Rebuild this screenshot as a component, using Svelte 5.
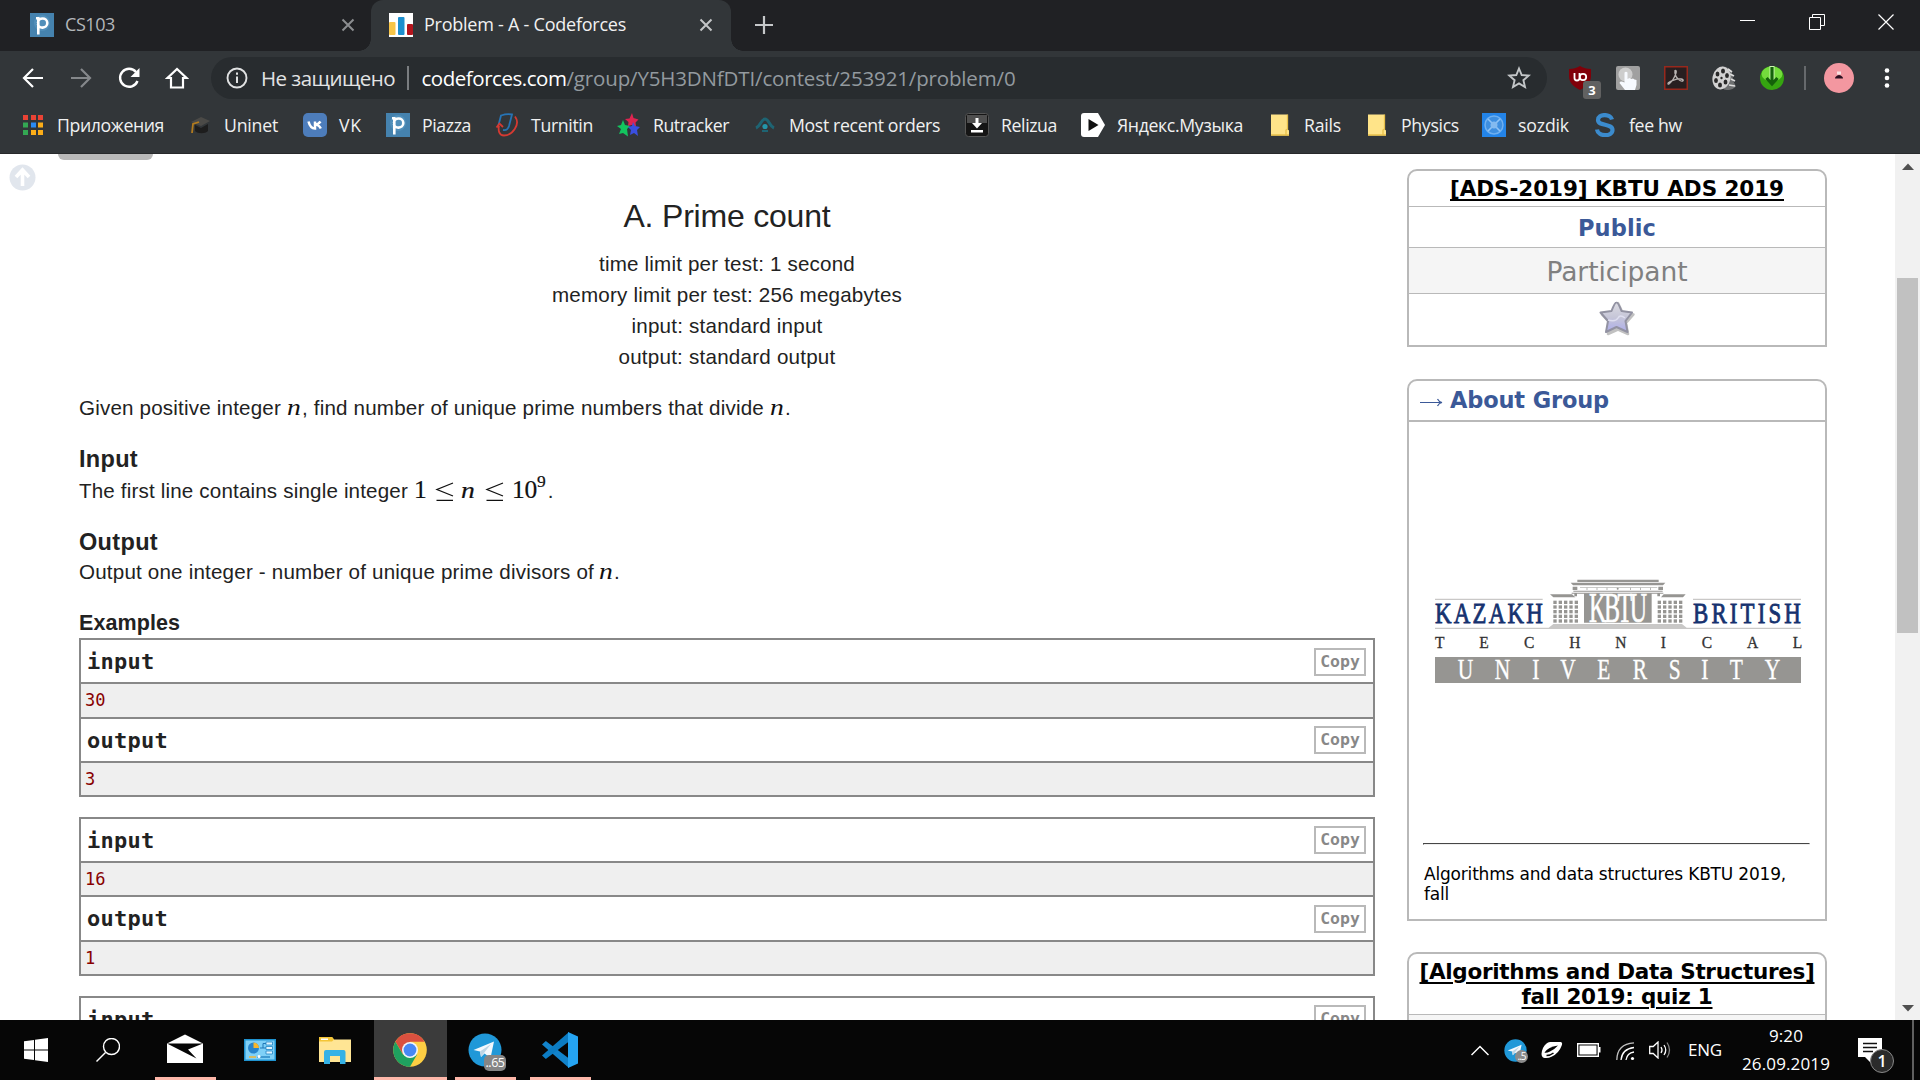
<script>
  // Spreads a run of text over an exact width by adjusting its letter spacing.
  function fit(node, width) {
    const natural = node.getBoundingClientRect().width;
    const count = node.textContent.length;
    node.style.letterSpacing = `${(width - natural) / count}px`;
  }

  const bookmarks = [
    { icon: 'apps', label: 'Приложения', x: 21, text: 107, end: 188 },
    { icon: 'cap', label: 'Uninet', x: 188, text: 54, end: 303 },
    { icon: 'vk', label: 'VK', x: 303, text: 23, end: 386 },
    { icon: 'piazza', label: 'Piazza', x: 386, text: 49, end: 495 },
    { icon: 'turnitin', label: 'Turnitin', x: 495, text: 62, end: 617 },
    { icon: 'rutracker', label: 'Rutracker', x: 617, text: 76, end: 753 },
    { icon: 'orders', label: 'Most recent orders', x: 753, text: 151, end: 965 },
    { icon: 'relizua', label: 'Relizua', x: 965, text: 56, end: 1081 },
    { icon: 'yandex', label: 'Яндекс.Музыка', x: 1081, text: 126, end: 1268 },
    { icon: 'folder', label: 'Rails', x: 1268, text: 37, end: 1365 },
    { icon: 'folder', label: 'Physics', x: 1365, text: 58, end: 1482 },
    { icon: 'sozdik', label: 'sozdik', x: 1482, text: 51, end: 1593 },
    { icon: 'fee', label: 'fee hw', x: 1593, text: 53, end: 1700 }
  ];

  const limits = [
    { text: 'time limit per test: 1 second', width: 256 },
    { text: 'memory limit per test: 256 megabytes', width: 350 },
    { text: 'input: standard input', width: 191 },
    { text: 'output: standard output', width: 217 }
  ];

  const samples = [
    { input: '30', output: '3' },
    { input: '16', output: '1' }
  ];

  const windowColumns = [0, 1, 2, 3, 4];
  const windowRows = [0, 1, 2, 3, 4];
</script>

{#snippet piazza()}
  <svg width="24" height="24" viewBox="0 0 24 24">
    <rect width="24" height="24" fill="#4582ae" />
    <circle cx="12" cy="10" r="8" fill="#5a97c2" opacity=".6" />
    <path d="M6 5.200h2.300V21.500M8 10c0-6 9.300-6 9.300 0s-9.300 6-9.300 1" fill="none" stroke="#fff" stroke-width="2.600" />
  </svg>
{/snippet}

{#snippet cross(color)}
  <svg width="14" height="14" viewBox="0 0 14 14"><path d="M1.500 1.500l11 11M12.500 1.500l-11 11" stroke={color} stroke-width="2" /></svg>
{/snippet}

{#snippet leq()}
  <svg class="leq" width="19" height="20" viewBox="0 0 19 20"><path d="M18 1L2 7.500 18 14M1.500 18.300H18" fill="none" stroke="#111" stroke-width="1.300" /></svg>
{/snippet}

{#snippet bookmarkIcon(name)}
  {#if name === 'piazza'}
    {@render piazza()}
  {:else}
    <svg width="24" height="24" viewBox="0 0 24 24">
      {#if name === 'apps'}
        <path d="M2 2h5v5H2zM10 2h5v5h-5zM17 2h5v5h-5z" fill="#ea4335" />
        <path d="M2 9.500h5v5H2zM2 17h5v5H2z" fill="#34a853" />
        <path d="M10 9.500h5v5h-5z" fill="#2a8bf5" />
        <path d="M17 9.500h5v5h-5zM10 17h5v5h-5zM17 17h5v5h-5z" fill="#fbad18" />
      {:else if name === 'cap'}
        <path d="M7 12l6 3 7-4v7c-3 3-10 3-13 0z" fill="#1d1d1d" />
        <path d="M3 9l10-5 9 4-9 5z" fill="#4b4a47" />
        <path d="M11 9l-6 2-1 9" fill="none" stroke="#b27b1e" stroke-width="1.800" />
      {:else if name === 'vk'}
        <rect width="24" height="24" rx="5" fill="#4d7dbb" />
        <path d="M5.500 8.500c1 4 3.200 7 6.500 7V8.500M12 11.500c2.500 0 4-1 5.500-3M12 11.500c3 0 4.500 1.500 5.800 4" fill="none" stroke="#fff" stroke-width="2.500" />
      {:else if name === 'turnitin'}
        <path d="M3.500 12L6 2.500q6-2 11-1L14 13q-1.500 5-6 4" fill="none" stroke="#2774b5" stroke-width="1.800" />
        <path d="M20 3.500c6 8-3 19-11 19-5 0-6-5-5-10M1.500 14.500l3-4 3.500 3.500" fill="none" stroke="#d53a32" stroke-width="1.800" />
      {:else if name === 'rutracker'}
        <path d="M15 0l1.500 5 5 1.500-3 3 .5 4-4-1.500-4 1 .5-4L8 6l4.500-.5z" fill="#df2450" />
        <path d="M6 7l2 5 5 1-3 3 1 7.500-5-3.500-4 1 2-5-4-3 4-1z" fill="#13c45e" />
        <path d="M16 9l2 4 5 1-3 3 1 6-4-3-4 2 1-5-3-3 4-1z" fill="#3a4fe0" />
      {:else if name === 'orders'}
        <path d="M3 15c5-2 5-9 9-9s4 7 9 9" fill="none" stroke="#1e6473" stroke-width="3" />
        <circle cx="12" cy="13.500" r="2.600" fill="#2396aa" />
        <path d="M9 18h6" stroke="#1e6473" stroke-width="2" />
      {:else if name === 'relizua'}
        <rect x=".5" y=".5" width="23" height="23" rx="3" fill="#151515" stroke="#555" />
        <path d="M2 2h20v8H2z" fill="#777" opacity=".6" />
        <path d="M10.500 5h3v5H17l-5 5.500L7 10h3.500zM6 17h12v2.500H6z" fill="#fff" />
      {:else if name === 'yandex'}
        <path d="M3 0h14l7 12-7 12H3q-3 0-3-3V3q0-3 3-3z" fill="#fff" />
        <path d="M7.500 6l10 6-10 6z" fill="#111" />
      {:else if name === 'folder'}
        <path d="M3 1.500h16.500V16l1.500 1.500v5H3z" fill="#ffe489" />
        <path d="M3 22h18M18 22v-5l1.500-1V1.500" fill="none" stroke="#e8c04a" stroke-width="1.300" />
      {:else if name === 'sozdik'}
        <rect width="24" height="24" fill="#2384e8" />
        <circle cx="12" cy="12" r="9" fill="#3e8fe0" stroke="#6fb0f0" stroke-width="1.500" />
        <path d="M6 6l12 12M18 6L6 18" stroke="#8fc3f6" stroke-width="1.600" />
        <circle cx="12" cy="12" r="3.500" fill="#83baf0" />
      {:else if name === 'fee'}
        <path d="M19 6.500C17.500 0.500 5 .5 5 7c0 6.500 14.500 3 14.500 10C19.500 24 5 24 4 16.500" fill="none" stroke="#3b8bcd" stroke-width="4.200" />
      {/if}
    </svg>
  {/if}
{/snippet}

{#snippet telegram(size)}
  <svg width={size} height={size} viewBox="0 0 34 34">
    <circle cx="17" cy="17" r="16.500" fill="#2098d8" />
    <path d="M5.500 17L26 8.500 22.500 25l-6-4.500-3.500 3.500-1-5.500z" fill="#f4f9fd" />
    <path d="M12 18.500L23 11l-7 9-3 4z" fill="#bdd5e5" />
  </svg>
{/snippet}

{#snippet sampleTitle(title)}
  <div class="sample-title">
    <span class="mono-title" use:fit={title.length * 13.5}>{title}</span>
    <button class="copy">Copy</button>
  </div>
{/snippet}

<div class="screen">
  <header class="tabs">
    <div class="tab first">
      {@render piazza()}
      <span class="tab-title" use:fit={50}>CS103</span>
      <span class="tab-close">{@render cross('#8b8d90')}</span>
    </div>
    <div class="tab active">
      <svg width="24" height="24" viewBox="0 0 24 24">
        <rect width="24" height="24" fill="#fff" />
        <rect x="0" y="9" width="6.500" height="13" rx="1" fill="#f7c548" />
        <rect x="9" y="4" width="6.500" height="18" rx="1" fill="#1d8fce" />
        <rect x="18" y="11" width="6" height="11" rx="1" fill="#b3151d" />
      </svg>
      <span class="tab-title" use:fit={202}>Problem - A - Codeforces</span>
      <span class="tab-close">{@render cross('#c3c5c7')}</span>
    </div>
    <svg class="new-tab" width="18" height="18" viewBox="0 0 18 18"><path d="M9 0v18M0 9h18" stroke="#c6c8ca" stroke-width="2.200" /></svg>
    <div class="window-controls">
      <svg width="16" height="16" viewBox="0 0 16 16"><path d="M0 6.500h15" stroke="#fff" /></svg>
      <svg width="16" height="16" viewBox="0 0 16 16" fill="none" stroke="#fff"><path d="M.5 3.500h11v12H.5zM3.500 3.500v-3h12v11h-3.500" /></svg>
      <svg width="16" height="16" viewBox="0 0 16 16"><path d="M.5 .5l15 15M15.500 .5l-15 15" stroke="#fff" stroke-width="1.200" /></svg>
    </div>
  </header>

  <nav class="toolbar">
    <div class="nav-icons">
      <svg width="24" height="24" viewBox="0 0 24 24" fill="none" stroke="#fff" stroke-width="2.200"><path d="M22 12H4M12 3l-9 9 9 9" /></svg>
      <svg width="24" height="24" viewBox="0 0 24 24" fill="none" stroke="#85888b" stroke-width="2.200"><path d="M2 12h18M12 3l9 9-9 9" /></svg>
      <svg width="24" height="24" viewBox="0 0 24 24" fill="none" stroke="#fff" stroke-width="2.400"><path d="M20.500 15A9 9 0 1 1 19 6" /><path d="M22.500 2v9h-9z" fill="#fff" stroke="none" /></svg>
      <svg width="24" height="24" viewBox="0 0 24 24" fill="none" stroke="#fff" stroke-width="2.200"><path d="M6 12v9.500h12V12h3.500L12 3l-9.500 9z" /></svg>
    </div>
    <div class="address">
      <svg width="22" height="22" viewBox="0 0 22 22" fill="none" stroke="#e0e1e2"><circle cx="11" cy="11" r="9.500" stroke-width="1.900" /><path d="M11 9.500v6.500M11 5.500v2.200" stroke-width="2" /></svg>
      <span class="insecure" use:fit={134}>Не защищено</span>
      <span class="divider"></span>
      <span class="host" use:fit={145}>codeforces.com</span>
      <span class="path" use:fit={449}>/group/Y5H3DNfDTI/contest/253921/problem/0</span>
      <svg class="fav" width="24" height="24" viewBox="0 0 24 24"><path d="M12 2.500l2.700 6.500 7 .6-5.300 4.600 1.600 6.800-6-3.600L6 21l1.600-6.800L2.300 9.600l7-.6z" fill="none" stroke="#c3c6c8" stroke-width="1.900" /></svg>
    </div>
    <div class="extensions">
      <div class="ublock">
        <svg width="24" height="24" viewBox="0 0 24 24">
          <path d="M12 0c3 2 7 3 11 3v7c0 7-5 11-11 14C6 21 1 17 1 10V3c4 0 8-1 11-3z" fill="#800009" />
          <path d="M6.500 7v5q0 2.500 2.500 2.500t2.500-2.500V7" fill="none" stroke="#fff" stroke-width="1.800" />
          <circle cx="15" cy="11" r="3.200" fill="none" stroke="#fff" stroke-width="1.800" />
        </svg>
        <span class="ublock-badge">3</span>
      </div>
      <svg width="24" height="24" viewBox="0 0 24 24">
        <rect width="24" height="24" rx="2" fill="#a0a0a0" />
        <circle cx="9.500" cy="8.500" r="7" fill="#cdcdcd" />
        <path d="M8.500 6.500q1.500-1.500 3 0v6.500l2-1 1.500 1 2-.5 1.500 1 2 .5v5l-1.500 5H9L3.500 17q.5-2.500 5-.5z" fill="#f7faff" />
      </svg>
      <svg width="24" height="24" viewBox="0 0 24 24">
        <rect x=".75" y=".75" width="22.500" height="22.500" fill="#281f20" stroke="#97281c" stroke-width="1.500" />
        <path d="M11 4.500c3-1 0 6-2 9s-5 6-5 4 9-5 13-4.500 2 3-1 1.500-6-6-5-10z" fill="none" stroke="#b9b3b1" stroke-width="1.300" />
      </svg>
      <svg width="24" height="24" viewBox="0 0 24 24">
        <path d="M10 .5c9 0 11 7 11 14l3 6q-5 5-12 3z" fill="#6d6f70" />
        <path d="M16 3l4 3M18 8l4 2M19 13l4 2M17 19l6 1" stroke="#ddd" stroke-width="1.700" />
        <ellipse cx="9.500" cy="12" rx="9" ry="11.500" transform="rotate(12 9.500 12)" fill="#d2d2d2" />
        <g fill="#292929"><ellipse cx="11" cy="5" rx="2" ry="2.500" /><ellipse cx="5.500" cy="8" rx="1.900" ry="2.500" /><ellipse cx="15" cy="9.500" rx="1.900" ry="2.500" /><ellipse cx="4" cy="14.500" rx="1.900" ry="2.500" /><ellipse cx="8" cy="19" rx="2" ry="2.500" /><ellipse cx="13.500" cy="16" rx="1.900" ry="2.500" /><circle cx="9.500" cy="12" r="1.200" /></g>
      </svg>
      <svg width="24" height="24" viewBox="0 0 24 24">
        <circle cx="12" cy="12" r="12" fill="#35a510" />
        <ellipse cx="12" cy="8" rx="10.500" ry="7.500" fill="#74dc3c" />
        <path d="M12 0v17" stroke="#c8f5ad" stroke-width="5" />
        <path d="M12 1v16M6.500 12l5.500 6 5.500-6" fill="none" stroke="#14610a" stroke-width="3.200" />
      </svg>
    </div>
    <span class="divider"></span>
    <svg class="avatar" width="30" height="30" viewBox="0 0 30 30">
      <circle cx="15" cy="15" r="15" fill="#f397a0" />
      <path d="M11 15.500q0-2.500 4-3.500 4 1 4 3.500z" fill="#2a1020" /><path d="M13 8.500h4v3h-4z" fill="#f7dfe0" />
    </svg>
    <svg class="menu" width="6" height="22" viewBox="0 0 6 22" fill="#fff"><circle cx="3" cy="3.500" r="2.300" /><circle cx="3" cy="11" r="2.300" /><circle cx="3" cy="18.500" r="2.300" /></svg>
  </nav>

  <div class="bookmarks">
    {#each bookmarks as mark}
      <a class="bookmark" href="#top" style="width: {mark.end - mark.x}px">
        {@render bookmarkIcon(mark.icon)}
        <span use:fit={mark.text}>{mark.label}</span>
      </a>
    {/each}
  </div>

  <div class="viewport">
    <div class="left-rail">
      <svg width="27" height="27" viewBox="0 0 27 27"><circle cx="13.500" cy="13.500" r="13" fill="#e1e6ed" /><path d="M13.500 22V7M7 13l6.500-7 6.500 7" fill="none" stroke="#fff" stroke-width="3.600" /></svg>
    </div>
    <div class="old-tab"></div>

    <main class="problem">
      <h1><span use:fit={207}>A. Prime count</span></h1>
      {#each limits as limit}
        <div class="limit"><span use:fit={limit.width}>{limit.text}</span></div>
      {/each}

      <p class="statement">
        <span use:fit={202}>Given positive integer</span><i class="gap">n</i><span class="pre" use:fit={462}>, find number of unique prime numbers that divide</span><i class="gap">n</i>.
      </p>

      <h2><span use:fit={59}>Input</span></h2>
      <p class="bound">
        <span use:fit={329}>The first line contains single integer</span><span class="math gap"><span class="wide">1</span>{@render leq()}<i>n</i>{@render leq()}<span use:fit={25}>10</span><sup>9</sup></span>.
      </p>

      <h2 class="out"><span use:fit={79}>Output</span></h2>
      <p>
        <span use:fit={515}>Output one integer - number of unique prime divisors of</span><i class="gap">n</i>.
      </p>

      <h3><span use:fit={101}>Examples</span></h3>
      {#each samples as sample}
        <div class="sample">
          {@render sampleTitle('input')}
          <pre class="sample-value">{sample.input}</pre>
          {@render sampleTitle('output')}
          <pre class="sample-value">{sample.output}</pre>
        </div>
      {/each}
      <div class="sample">{@render sampleTitle('input')}</div>
    </main>

    <aside class="sidebar">
      <section class="box">
        <div class="line contest"><a href="#group" use:fit={334}>[ADS-2019] KBTU ADS 2019</a></div>
        <div class="line public"><span use:fit={78}>Public</span></div>
        <div class="line participant"><span use:fit={141}>Participant</span></div>
        <div class="line starline">
          <svg width="38" height="38" viewBox="0 0 38 38">
            <defs>
              <linearGradient id="starFill" x1="0" y1="0" x2="0" y2="1"><stop offset="0" stop-color="#dcdce2" /><stop offset=".5" stop-color="#c6c6d8" /><stop offset="1" stop-color="#adadea" /></linearGradient>
            </defs>
            <path d="M20 4l4.500 9.500 11 2-7.500 8.500 2 11-10-4.500-10 4.500 2-11-8-8.500 11-2z" fill="#999" stroke="#999" stroke-width="2.500" stroke-linejoin="round" opacity=".6" />
            <path d="M18.500 3.500Q20 3 23.500 12L34 13.500 27.500 22l2 11-11-5-10.500 5 2-11-7.500-8.500L13.500 12Q17 3 18.500 3.500z" fill="url(#starFill)" stroke="#9292a2" stroke-width="2" stroke-linejoin="round" />
            <path d="M10 21q8 2 10-2t7 0" fill="none" stroke="#dfdff0" stroke-width="1.500" />
          </svg>
        </div>
      </section>

      <section class="box about">
        <h4><svg class="arrow" width="23" height="9" viewBox="0 0 23 9"><path d="M0 4.500h21.500M17.500 1q1.500 3 4.500 3.500-3 .5-4.500 3.500" fill="none" stroke="#3b5998" stroke-width="1.200" /></svg><span use:fit={159}>About Group</span></h4>
        <div class="about-body">
          <svg class="logo" width="372" height="110" viewBox="96 54 1116 330">
            <g fill="#969592">
              <path d="M532 59h244v7H532zM512 68h284l-7 8H519zM450 103h66l10 9h-66zM791 103h66l-8 9h-66z" />
              <path d="M518 80h14v10h-14zM775 80h14v10h-14zM540 82h232v1.500H540zM520 92h268v3H520zM552 100h203v88H552z" />
              <path d="M515 98h275v3H515zM523 101h8v8h-8zM772 101h8v8h-8z" />
              {#each windowColumns as column}
                {#each windowRows as row}
                  <rect x={460 + column * 16} y={122 + row * 14} width="10" height="10" />
                  <rect x={773 + column * 16} y={122 + row * 14} width="10" height="10" />
                {/each}
              {/each}
              <path d="M105 291h1098v78H105z" />
            </g>
            <g fill="#c9c8c7"><path d="M105 116h323v4H105zM879 116h324v4H879zM105 203h1098v4H105zM460 192h386l14 11H446z" /></g>
            <g fill="#969592"><circle cx="653" cy="86" r="3" /><path d="M560 83h2v7h-2zM590 83h2v7h-2zM620 83h2v7h-2zM690 83h2v7h-2zM720 83h2v7h-2zM750 83h2v7h-2z" /></g>
            <g class="logo-text">
              <g fill="#16326f" stroke="#16326f" stroke-width="2.500" font-size="88">
                <text transform="translate(105 188) scale(.78 1)" textLength="415">KAZAKH</text>
                <text transform="translate(879 188) scale(.78 1)" textLength="415">BRITISH</text>
              </g>
              <text transform="translate(567 187) scale(.58 1)" textLength="300" fill="#fff" stroke="#fff" stroke-width="2" font-size="124">KBTU</text>
              <text y="265" fill="#333" stroke="#333" font-size="53" transform="scale(.88 1)">{#each [105, 238, 372, 508, 646, 782, 905, 1041, 1178] as x, i}<tspan x={x / 0.88}>{'TECHNICAL'[i]}</tspan>{/each}</text>
              <text y="358" fill="#fff" stroke="#fff" font-size="87" transform="scale(.74 1)">{#each [173, 284, 397, 481, 592, 698, 806, 904, 989, 1094] as x, i}<tspan x={x / 0.74}>{'UNIVERSITY'[i]}</tspan>{/each}</text>
            </g>
          </svg>
          <hr />
          <p class="about-text"><span use:fit={362}>Algorithms and data structures KBTU 2019,</span><br /><span use:fit={25}>fall</span></p>
        </div>
      </section>

      <section class="box quiz">
        <div class="line quiz-title">
          <a href="#quiz" use:fit={395}>[Algorithms and Data Structures]</a>
          <a href="#quiz" use:fit={191}>fall 2019: quiz 1</a>
        </div>
        <div class="quiz-body"></div>
      </section>
    </aside>

    <div class="scrollbar">
      <svg width="12" height="7" viewBox="0 0 12 7"><path d="M0 7l6-6.500L12 7z" fill="#505050" /></svg>
      <div class="thumb"></div>
      <svg width="12" height="7" viewBox="0 0 12 7"><path d="M0 0l6 6.500L12 0z" fill="#505050" /></svg>
    </div>
  </div>

  <footer class="taskbar">
    <div class="app start"><svg width="24" height="24" viewBox="0 0 24 24" fill="#fff"><path d="M0 3.300l10-1.300v9.400H0zM11 1.800L24 0v11.400H11zM0 12.600h10V22L0 20.700zM11 12.600h13V24l-13-1.800z" /></svg></div>
    <div class="app find"><svg width="24" height="24" viewBox="0 0 24 24" fill="none" stroke="#fff" stroke-width="1.400"><circle cx="15.500" cy="8.500" r="8" /><path d="M9.500 14.500L.5 23.500" /></svg></div>
    <div class="app mail open"><svg width="36" height="30" viewBox="0 0 36 30"><path d="M0 9.500L18 .5l18 9V29H0z" fill="#fff" /><path d="M0 9.500h36L21 15.500l8.500 9L0 9.500z" fill="#060606" /></svg></div>
    <div class="app panel"><svg width="32" height="22" viewBox="0 0 32 22">
      <rect width="32" height="22" fill="#1f93d0" /><rect x="1.500" y="1.500" width="29" height="19" fill="#7fd0f7" />
      <circle cx="9.500" cy="9" r="5.500" fill="#2784cc" /><path d="M9.500 9V3.500A5.500 5.500 0 0 1 15 9z" fill="#f8b62b" />
      <path d="M16 9h3V4.500h3M19 9h3" fill="none" stroke="#2077b7" />
      <path d="M22 3h6.500v3H22zM22 7.500h6.500v3H22zM22 12h6.500v3H22z" fill="#dff4ff" stroke="#2186c6" stroke-width=".8" />
      <path d="M5 18h7" stroke="#f0b637" stroke-width="1.500" /><path d="M13 18h13" stroke="#2b88c5" stroke-width="1.500" /><circle cx="15" cy="17.500" r="1.500" fill="#fff" />
    </svg></div>
    <div class="app explorer"><svg width="32" height="27" viewBox="0 0 32 27">
      <path d="M0 0h13l2 2.500h17V25H0z" fill="#ffe594" /><path d="M0 0h13l2 2.500-2 2H0z" fill="#f4c536" /><path d="M2 1.500h7v1.500H2z" fill="#fff" />
      <path d="M5 27V15q0-2 2-2h17.500q2 0 2 2v12H21v-8H11v8z" fill="#35b2e6" />
    </svg></div>
    <div class="app chrome open"><svg width="34" height="34" viewBox="0 0 34 34">
      <circle cx="17" cy="17" r="16.800" fill="#fdce43" />
      <path d="M2.400 8.700A16.800 16.800 0 0 1 31.600 8.700H17L9.800 21z" fill="#d9503f" />
      <path d="M2.400 8.700A16.800 16.800 0 0 0 17 33.800l7.200-12.600L17 25 9.800 21.200z" fill="#1fa15f" />
      <circle cx="17" cy="17" r="8" fill="#f2f5f8" /><circle cx="17" cy="17" r="6.400" fill="#4788f4" />
    </svg></div>
    <div class="app tg open">{@render telegram(34)}<span class="tg-badge">..65</span></div>
    <div class="app code open"><svg width="36" height="36" viewBox="0 0 36 36">
      <path d="M0 12.500L3.800 9 27 26.500V36z" fill="#1283cb" /><path d="M0 23.500L3.800 27 27 9.500V0z" fill="#0c7cc3" /><path d="M26 0l10 4.500v27L26 36z" fill="#25a4f2" />
    </svg></div>

    <div class="tray">
      <svg class="chevron" width="18" height="11" viewBox="0 0 18 11"><path d="M.5 10L9 1.500l8.500 8.500" fill="none" stroke="#fff" stroke-width="1.500" /></svg>
      <div class="mini-tg">{@render telegram(23)}<span class="mini-badge">..5</span></div>
      <svg class="shell" width="22" height="18" viewBox="0 0 22 18"><path d="M2 7Q5 1.500 9 1h11q2 1 .5 4Q18 12 11 15.500 6 18 2 16.500-1 14 2 7z" fill="#fff" /><path d="M3.500 11.500Q7 6 17 4.500 14 8 9 10.500 5 12.500 3.500 11.500z" fill="#060606" /><path d="M5.500 14.500q4 0 7-2.500" fill="none" stroke="#060606" stroke-width="1.500" /></svg>
      <svg class="battery" width="24" height="14" viewBox="0 0 24 14"><path d="M.7.700h20.600v12.600H.7z" fill="none" stroke="#fff" stroke-width="1.400" /><path d="M2.500 2.500h17v9h-17zM22 4h1.500v5.500H22z" fill="#fff" /></svg>
      <svg class="wifi" width="19" height="19" viewBox="0 0 19 19" fill="none" stroke="#fff" stroke-width="1.300"><path d="M.8 18Q1 2 18 .8" opacity=".75" /><path d="M5 18Q6 7 18 5.500" /><path d="M10 18q1-7 8-8" /><circle cx="16.500" cy="16.500" r="1.600" fill="#fff" stroke="none" /></svg>
      <svg class="sound" width="23" height="18" viewBox="0 0 23 18" fill="none" stroke="#fff" stroke-width="1.300"><path d="M.7 5.500h3.500L9 1v16l-4.800-4.500H.7z" /><path d="M12 6q2 3 0 6M15 4q3.500 5 0 10" /><path d="M18 1.500q5 7.500 0 15" opacity=".5" /></svg>
      <span class="lang"><span use:fit={34}>ENG</span></span>
      <div class="clock"><span use:fit={34}>9:20</span><span use:fit={88}>26.09.2019</span></div>
      <div class="notes">
        <svg width="24" height="26" viewBox="0 0 24 26"><path d="M0 0h24v19H13v6l-6-6H0z" fill="#fff" /><path d="M5 5.500h14M5 9.500h14M5 13.500h10" stroke="#111" stroke-width="1.300" /></svg>
        <span class="notes-badge">1</span>
      </div>
      <span class="peek"></span>
    </div>
  </footer>
</div>

<style>
  :global(body) { margin: 0; overflow: hidden; background: #fff; }
  .screen { width: 1920px; height: 1080px; display: flex; flex-direction: column; overflow: hidden; font-family: 'Open Sans', 'Noto Sans', sans-serif; }
  svg { display: block; flex: none; }
  a { color: inherit; text-decoration: none; }
  span { white-space: nowrap; }

  .tabs { height: 51px; flex: none; display: flex; background: #202124; color: #f1f1f1; font-size: 18px; line-height: 24px; }
  .tab { box-sizing: border-box; height: 51px; padding-top: 13px; display: flex; align-items: flex-start; }
  .first { width: 371px; padding-left: 30px; color: #b4b7ba; }
  .tab-title { margin: -1px 0 0 11px; }
  .tab-close { margin: 5px 16px 0 auto; }
  .active { position: relative; width: 360px; padding-left: 18px; background: #323639; border-radius: 12px 12px 0 0; }
  .active .tab-close { margin-right: 18px; }
  .active::before, .active::after { content: ''; position: absolute; bottom: 0; width: 12px; height: 12px; }
  .active::before { left: -12px; background: radial-gradient(circle at 0 0, transparent 11.5px, #323639 12px); }
  .active::after { right: -12px; background: radial-gradient(circle at 100% 0, transparent 11.5px, #323639 12px); }
  .new-tab { margin: 16px 0 0 23.5px; }
  .window-controls { margin: 14px 26px 0 auto; display: flex; gap: 53px; }

  .toolbar { height: 53px; flex: none; display: flex; align-items: center; background: #323639; box-sizing: border-box; padding: 1px 30px 0 21px; }
  .nav-icons { display: flex; gap: 24px; width: 190px; }
  .address { box-sizing: border-box; width: 1336px; height: 42px; border-radius: 21px; background: #282c2f; display: flex; align-items: center; padding: 0 16px 0 15px; font-size: 20.5px; line-height: 26px; }
  .insecure { margin-left: 13px; color: #e2e3e4; }
  .divider { width: 1.5px; height: 24px; background: #66696c; }
  .address .divider { margin: 0 13px 0 12px; background: #7a7d80; }
  .host { color: #fff; }
  .path { color: #939a9f; }
  .fav { margin-left: auto; }
  .extensions { display: flex; gap: 24px; margin: 0 20px 0 21px; }
  .ublock { position: relative; }
  .ublock-badge { position: absolute; left: 15px; top: 15px; width: 18px; height: 18px; border-radius: 3px; background: #616161; color: #fff; font: bold 13px/19px 'Open Sans', sans-serif; text-align: center; }
  .avatar { margin-left: 18px; }
  .menu { margin-left: auto; }

  .bookmarks { box-sizing: border-box; height: 50px; flex: none; display: flex; padding: 9px 0 0 21px; background: #323639; border-bottom: 1px solid #27292b; color: #f0f1f1; font-size: 17.7px; line-height: 24px; }
  .bookmark { display: flex; gap: 12px; flex: none; }
  .bookmark span { height: 24px; }

  .viewport { position: relative; height: 866px; flex: none; display: flex; overflow: hidden; background: #fff; color: #222; font-family: 'Liberation Sans', Arial, sans-serif; }
  .left-rail { width: 79px; flex: none; box-sizing: border-box; padding: 10px 0 0 9px; }
  .old-tab { position: absolute; left: 58px; top: 0; width: 95px; height: 6px; border-radius: 0 0 6px 6px; background: #b9b9b9; }
  .problem { width: 1296px; flex: none; padding-top: 43px; font-size: 20.6px; line-height: 31px; }
  h1 { margin: 0 0 12px; font-weight: 400; font-size: 32px; line-height: 39px; text-align: center; }
  .limit { height: 31px; text-align: center; }
  p { margin: 0; white-space: nowrap; height: 32px; line-height: 32px; }
  .statement { margin: 20px 0 21px; }
  .bound { margin-top: 2px; }
  .pre { white-space: pre; }
  p i { font-family: 'Liberation Serif', serif; font-size: 24px; line-height: 1px; color: #111; display: inline-block; transform: scaleX(1.15); width: 14px; }
  .math { display: inline-flex; align-items: baseline; color: #111; font-family: 'Liberation Serif', serif; font-size: 25.5px; line-height: 1px; white-space: nowrap; -webkit-text-stroke: 0.2px #111; }
  .math i { width: 14px; }
  .math .wide { width: 14px; }
  .leq { margin: 0 8px 0 7px; position: relative; top: 4px; }
  .leq + i + .leq { margin: 0 8.5px 0 8.5px; }
  .math sup { font-size: 17.5px; line-height: 1px; position: relative; top: -11px; vertical-align: baseline; margin: 0 2px 0 0; }
  .gap { margin-left: 6px; }
  .statement .gap { margin-left: 7px; }
  h2 { margin: 0; font-size: 23.5px; line-height: 28px; height: 28px; }
  .out { margin-top: 21px; }
  h3 { margin: 21px 0 2px; font-size: 21.5px; line-height: 28px; height: 27px; }
  .sample { border: 2px solid #888; border-top: 0; margin-bottom: 19.6px; font-family: 'DejaVu Sans Mono', monospace; }
  .sample-title { box-sizing: border-box; height: 46.2px; border: solid #888; border-width: 2px 0; display: flex; justify-content: space-between; align-items: center; padding: 0 7px 0 6px; }
  .mono-title { font-weight: bold; font-size: 22px; line-height: 28px; padding-top: 2px; }
  .sample-value { box-sizing: border-box; margin: 0; height: 32.4px; padding: 0 0 0 4px; background: #efefef; color: #800; font: 17px/32px 'DejaVu Sans Mono', monospace; }
  .copy { box-sizing: border-box; width: 52px; height: 28px; margin-top: 1px; padding: 0; border: 2px solid #b9b9b9; background: #fff; color: #888; font: bold 16.5px/24px 'DejaVu Sans Mono', monospace; }

  .sidebar { margin: 15px 0 0 32px; width: 420px; flex: none; font-family: Verdana, 'DejaVu Sans', sans-serif; color: #000; }
  .box { box-sizing: border-box; border: 2px solid #b9b9b9; border-radius: 10px 10px 0 0; height: 178px; margin-bottom: 32px; }
  .line { text-align: center; box-sizing: border-box; border-bottom: 1px solid #b9b9b9; }
  .contest, .quiz { font-weight: bold; font-size: 21.5px; line-height: 24px; }
  .contest a, .quiz a { text-decoration: underline; text-decoration-thickness: 2px; text-underline-offset: 3px; display: inline-block; white-space: nowrap; }
  .contest { height: 36px; padding-top: 6px; }
  .public { height: 41px; color: #3b5998; font-weight: bold; font-size: 22.5px; line-height: 42px; }
  .participant { height: 46px; background: #f5f5f5; color: #808080; font-size: 26.5px; line-height: 48px; }
  .starline { border: 0; display: flex; justify-content: center; padding-top: 5px; }
  .about { height: 542px; margin-bottom: 31px; }
  h4 { box-sizing: border-box; margin: 0; height: 41px; border-bottom: 2px solid #b9b9b9; color: #3b5998; font-size: 22.5px; line-height: 38px; display: flex; padding-left: 11px; gap: 7px; }
  .arrow { margin-top: 17px; }
  .about-body { padding: 156px 15px 0 14px; }
  .logo { margin: 0 0 0 9px; }
  .logo-text { font-family: 'Liberation Serif', serif; }
  hr { margin: 155px 0 0; border: 1px inset #eee; border-color: #9a9a9a #eee #eee #9a9a9a; }
  .about-text { margin: 19px 0 0 1px; font-size: 17px; line-height: 20px; height: 40px; }
  .quiz { height: 300px; }
  .quiz-title { height: 61px; padding-top: 5px; line-height: 25px; }
  .quiz-body { height: 200px; background: #f5f5f5; }

  .scrollbar { box-sizing: border-box; width: 25px; height: 866px; margin-left: auto; background: #f1f1f1; display: flex; flex-direction: column; align-items: center; padding: 9px 0 8px; }
  .thumb { width: 21px; height: 355px; margin: 108px 0 auto; background: #c1c1c1; }

  .taskbar { height: 60px; flex: none; display: flex; background: #060606; color: #fff; }
  .app { position: relative; box-sizing: border-box; height: 60px; display: flex; align-items: center; justify-content: center; flex: none; }
  .open::after { content: ''; position: absolute; left: 0; right: 0; bottom: 0; height: 3px; background: #fdb7a9; }
  .start { width: 72px; }
  .find { width: 72px; }
  .mail { width: 61px; margin-left: 11px; padding: 0 1px 3px 0; }
  .panel { width: 32px; margin-left: 28px; }
  .explorer { width: 32px; margin-left: 43px; }
  .chrome { width: 73px; margin-left: 23px; padding-right: 2px; background: #3b3b3b; }
  .tg { width: 61px; margin-left: 8px; padding-right: 2px; }
  .code { width: 61px; margin-left: 14px; padding-right: 2px; }
  .tg-badge { position: absolute; left: 29px; top: 35px; width: 22px; height: 16px; border-radius: 5px; background: #858585; font-size: 12.5px; line-height: 16px; text-align: center; letter-spacing: -0.5px; }
  .tray { margin-left: auto; width: 449px; display: flex; align-items: center; font-size: 17px; }
  .mini-tg { position: relative; margin-left: 15px; }
  .mini-badge { position: absolute; left: 11px; top: 11px; width: 13px; height: 13px; border-radius: 7px; background: #8b8b8b; font-size: 10px; line-height: 13px; letter-spacing: -1px; text-align: center; }
  .shell { margin-left: 14px; }
  .battery { margin-left: 14px; }
  .wifi { margin: 2px 0 0 15px; }
  .sound { margin-left: 14px; }
  .lang { margin-left: 16px; width: 33px; line-height: 24px; }
  .clock { margin-left: 21px; width: 88px; height: 60px; box-sizing: border-box; padding-top: 2px; display: flex; flex-direction: column; align-items: center; line-height: 28px; }
  .notes { position: relative; margin: 1px 0 0 28px; }
  .notes-badge { position: absolute; left: 12px; top: 11px; box-sizing: border-box; width: 24px; height: 24px; border: 1px solid #888; border-radius: 50%; background: #2b2b2b; font: 600 16px/22px 'Open Sans', sans-serif; text-align: center; }
  .peek { width: 2px; height: 60px; margin-left: 30px; background: #5f5f5f; }
</style>
